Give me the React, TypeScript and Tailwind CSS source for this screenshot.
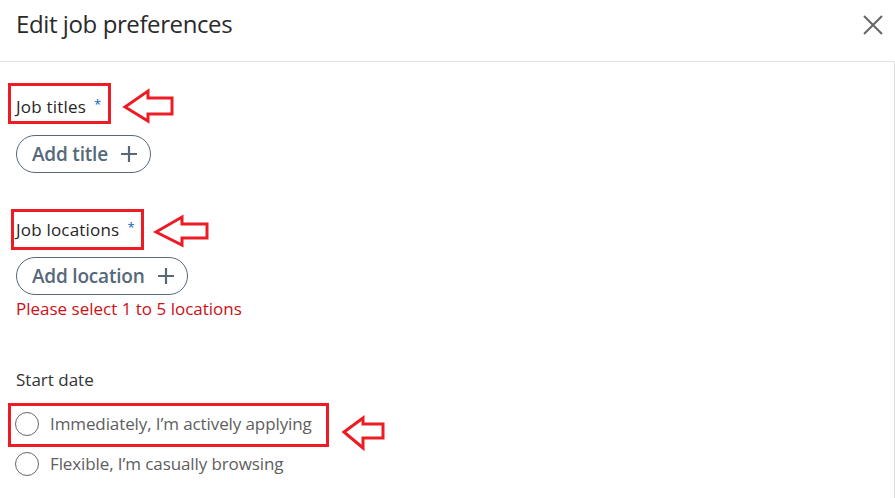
import React from "react";

const font = { fontFamily: '"Open Sans", "Noto Sans", Arial, sans-serif' };

function Arrow({ left, top, w, h, points }: { left: number; top: number; w: number; h: number; points: string }) {
  return (
    <svg
      className="absolute"
      style={{ left, top }}
      width={w}
      height={h}
      viewBox={`0 0 ${w} ${h}`}
    >
      <polygon points={points} fill="none" stroke="#ed1c24" strokeWidth={3} strokeLinejoin="miter" />
    </svg>
  );
}

function Pill({ label }: { label: string }) {
  return (
    <button className="flex h-[38px] items-center gap-[12px] rounded-full border border-[#56687a] pl-[15px] pr-[12px] text-[19px] font-semibold text-[#56687a] tracking-[-0.2px]">
      <span>{label}</span>
      <svg width="18" height="18" viewBox="0 0 18 18">
        <path d="M9 1v16M1 9h16" stroke="#56687a" strokeWidth="2.2" />
      </svg>
    </button>
  );
}

function Radio({ label }: { label: string }) {
  return (
    <div className="flex h-[24px] items-center">
      <div className="ml-[-1px] h-[24px] w-[24px] rounded-full border border-[#666666]" />
      <span className="ml-[11px] text-[17px] text-[#5e5e5e] tracking-[-0.1px]">{label}</span>
    </div>
  );
}

export default function App() {
  return (
    <div className="relative h-[498px] w-[895px] overflow-hidden bg-white" style={font}>
      <div className="flex h-[62px] items-start justify-between border-b border-[#e0e0e0] pl-[16px] pr-[10px] pt-[8px]">
        <h1 className="text-[24px] leading-[32px] text-[#2a2a2a] tracking-[-0.4px]">Edit job preferences</h1>
        <svg className="mt-[5px]" width="24" height="24" viewBox="0 0 24 24">
          <path d="M3 3l18 18M21 3L3 21" stroke="#666666" strokeWidth="2" />
        </svg>
      </div>
      <div className="h-[436px] border-r border-[#e0e0e0] pl-[16px] pt-[33px]">
        <div className="flex h-[24px] items-center text-[17px] text-[#262626] tracking-[0.2px]">
          Job titles <span className="ml-[8px] mb-[4px] text-[13px] text-[#0a66c2]">*</span>
        </div>
        <div className="mt-[16px] flex">
          <Pill label="Add title" />
        </div>
        <div className="mt-[45px] flex h-[24px] items-center text-[17px] text-[#262626] tracking-[0.2px]">
          Job locations <span className="ml-[8px] mb-[4px] text-[13px] text-[#0a66c2]">*</span>
        </div>
        <div className="mt-[15px] flex">
          <Pill label="Add location" />
        </div>
        <div className="mt-[2px] h-[24px] text-[17px] leading-[24px] text-[#cc1016]">
          Please select 1 to 5 locations
        </div>
        <div className="mt-[47px] h-[24px] text-[17px] leading-[24px] text-[#333333]">
          Start date
        </div>
        <div className="mt-[20px]">
          <Radio label="Immediately, I’m actively applying" />
        </div>
        <div className="mt-[16px]">
          <Radio label="Flexible, I’m casually browsing" />
        </div>
      </div>

      {/* annotation boxes */}
      <div className="absolute left-[8px] top-[83px] h-[41px] w-[103px] border-[3px] border-[#ed1c24]" />
      <div className="absolute left-[11px] top-[209px] h-[41px] w-[133px] border-[3px] border-[#ed1c24]" />
      <div className="absolute left-[8px] top-[403px] h-[44px] w-[321px] border-[3px] border-[#ed1c24]" />

      {/* annotation arrows */}
      <Arrow left={120} top={86} w={58} h={40} points="5,21 28,5 28,12 52,12 52,28 28,28 28,35" />
      <Arrow left={151} top={213} w={60} h={36} points="5,19 31,4 31,11 56,11 56,25 31,25 31,32" />
      <Arrow left={340} top={414} w={47} h={38} points="4,18 23,4 23,10 43,10 43,24 23,24 23,34" />
    </div>
  );
}
